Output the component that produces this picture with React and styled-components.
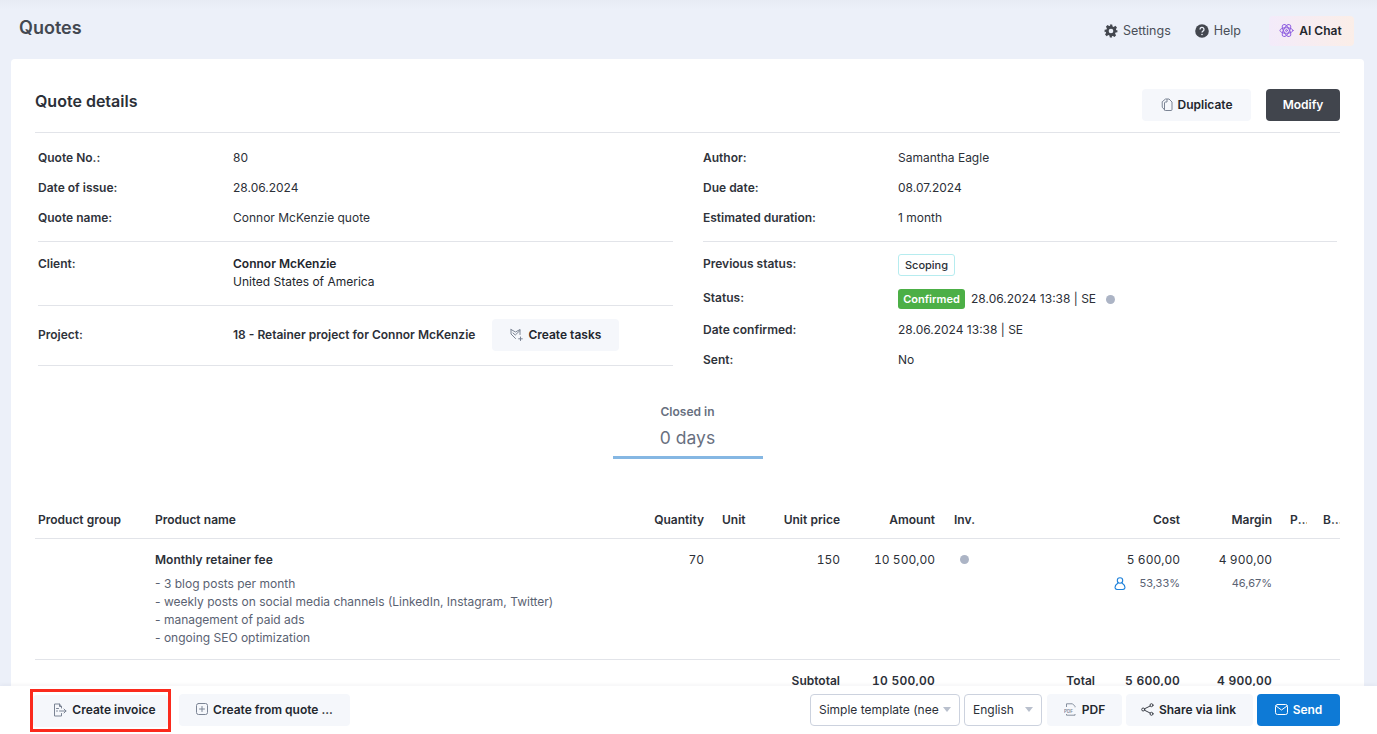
import React from "react";
import styled, { createGlobalStyle } from "styled-components";

const Global = createGlobalStyle`
  html, body { margin: 0; padding: 0; height: 100%; overflow: hidden; }
  body { font-family: Inter, "Liberation Sans", sans-serif; color: #23272e; font-size: 12px; -webkit-font-smoothing: antialiased; }
  #root { height: 100%; }
  * { box-sizing: border-box; }
`;

const Page = styled.div`
  height: 734px; display: flex; flex-direction: column; background: #ecf0f9; overflow: hidden;
`;
const Header = styled.header`
  height: 59px; flex: none; display: flex; align-items: flex-start; justify-content: space-between;
  padding: 0 23px 0 19px;
  background: linear-gradient(#e7ebf4 0, #ecf0f9 10px);
`;
const Title = styled.h1`
  margin: 18px 0 0; font-size: 18px; line-height: 20px; font-weight: 600; color: #434851;
`;
const HeaderTools = styled.div`
  display: flex; align-items: center; margin-top: 16px; height: 30px;
`;
const ToolLink = styled.span`
  display: flex; align-items: center; gap: 5px; font-size: 12.5px; color: #4a4f58; margin-right: ${p => p.$mr}px;
  line-height: 14px; padding-bottom: ${p => p.$pb || 0}px;
`;
const AiButton = styled.span`
  display: flex; align-items: center; justify-content: center; gap: 5px; width: 85px; height: 30px;
  border-radius: 4px; font-weight: 600; font-size: 12px; color: #23272e; padding: 0 2px 1px 0;
  background: linear-gradient(90deg, #f3ebfa, #fbeee8);
`;
const Main = styled.main`
  flex: 1; min-height: 0; padding: 0 13px 0 11px; overflow: hidden;
`;
const Card = styled.section`
  background: #fff; border-radius: 4px 4px 0 0; padding: 30px 24px 0; height: 100%; overflow: hidden;
`;
const CardHead = styled.div`
  display: flex; justify-content: space-between; align-items: center; height: 32px; margin-bottom: 11px;
`;
const CardTitle = styled.h2`
  margin: 0 0 8px; font-size: 16px; line-height: 24px; font-weight: 600; color: #2c3038;
`;
const Actions = styled.div`display: flex; gap: 15px;`;
const Btn = styled.button`
  display: flex; align-items: center; justify-content: center; gap: 5px; height: 32px; width: ${p => p.$w}px;
  padding: 0 ${p => p.$pr || 0}px 2px ${p => p.$pl || 0}px; border: 0; border-radius: 4px; font: 600 12px Inter, sans-serif; color: #23272e; background: #f5f7fb;
  flex: none;
`;
const DarkBtn = styled(Btn)`background: #41454d; color: #fff;`;
const SendBtn = styled(Btn)`background: #0e7ad6; color: #fff;`;
const PdfBtn = styled(Btn)`margin-left: 1px;`;
const Details = styled.div`
  border-top: 1px solid #e2e4e9; display: grid; grid-template-columns: 635px 634px; column-gap: 30px; padding: 10px 3px 0;
`;
const Col = styled.div`display: flex; flex-direction: column;`;
const Group = styled.div`
  padding: 0 0 ${p => p.$pb ?? 8}px; border-bottom: ${p => p.$plain ? 0 : "1px solid #e2e4e9"};
`;
const Row = styled.div`
  display: grid; grid-template-columns: 195px 1fr; align-items: center; min-height: ${p => p.$h || 30}px;
  line-height: 16px;
`;
const ClientRow = styled(Row)`
  align-items: start; padding-top: 13px; line-height: 18px;
`;
const Label = styled.span`font-weight: 600; color: #2f333b; display: block;`;
const Value = styled.span`display: flex; align-items: center; color: #2c3038;`;
const Stack = styled.span`display: block;`;
const Strong = styled.strong`font-weight: 600; display: block;`;
const TaskBtn = styled(Btn)`margin-left: 17px; padding-bottom: 0;`;
const ProjectRow = styled(Row)`padding-bottom: 2px;`;
const Scoping = styled.span`
  display: inline-flex; align-items: center; height: 22px; padding: 0 5px; border: 1px solid #b6ecef; border-radius: 3px;
  font-size: 11px; font-weight: 500; margin-top: 2px; width: 57px; justify-content: center;
`;
const Confirmed = styled.span`
  display: inline-flex; align-items: center; justify-content: center; height: 20px; width: 67px; background: #4caf46; color: #fff; border-radius: 3px;
  font-size: 11px; font-weight: 600; margin-right: 6px;
`;
const StatusValue = styled(Value)`margin-top: 2px;`;
const Dot = styled.span`
  display: inline-block; width: 9px; height: 9px; border-radius: 50%; background: #acb4c5; margin-left: ${p => p.$ml || 0}px;
`;
const Closed = styled.div`
  width: 150px; margin: 35px auto 0; text-align: center; border-bottom: 3px solid #85b7e3; height: 54px;
`;
const ClosedLabel = styled.div`font-size: 12px; font-weight: 600; color: #68707f; line-height: 14px;`;
const ClosedValue = styled.div`font-size: 17.5px; color: #68707f; line-height: 24px; margin-top: 7px;`;
const Table = styled.div`margin-top: 42px; font-variant-numeric: tabular-nums;`;
const TRow = styled.div`
  display: grid; grid-template-columns: 117px 478px 77px 53px 83px 95px 62px 183px 92px 32px 33px;
  border-bottom: ${p => p.$line ? "1px solid #e2e4e9" : 0};
  min-height: ${p => p.$h}px; align-items: ${p => p.$start ? "start" : "center"};
  padding-top: ${p => p.$pt || 0}px;
`;
const Cell = styled.div`
  padding: 0 3px 0 ${p => p.$pl ?? 3}px; text-align: ${p => p.$right ? "right" : "left"};
  font-weight: ${p => p.$bold ? 600 : 400}; white-space: nowrap; overflow: hidden; line-height: 18px;
  ${p => p.$clip && "text-overflow: ellipsis;"}
  color: #2c3038;
`;
const Desc = styled.div`color: #5a6272; line-height: 18px; margin-top: 6px; font-variant-numeric: normal;`;
const Sub = styled.div`
  color: #5a6272; font-size: 11px; line-height: 18px; margin-top: 5px; display: flex; justify-content: flex-end; align-items: center; gap: 14px;
  font-variant-numeric: normal;
`;
const TotalPair = styled.div`display: flex; justify-content: flex-end; gap: 30px;`;
const Money = styled.span`letter-spacing: .25px;`;
const Footer = styled.footer`
  flex: none; height: 48px; background: #fff; display: flex; align-items: center; justify-content: space-between; padding: 0 37px 0 30px;
  box-shadow: 0 -1px 4px rgba(30, 40, 70, .06); position: relative; z-index: 1;
`;
const FooterGroup = styled.div`display: flex; align-items: center; gap: ${p => p.$gap}px;`;
const Highlight = styled.div`
  border: 3px solid #fb2a1d; width: 141px; height: 43px; display: flex; align-items: center; justify-content: center;
  margin-top: 1px;
`;
const Select = styled.div`
  width: ${p => p.$w}px; height: 32px; border: 1px solid #ccd2de; border-radius: 4px; padding: 0 8px 1px; display: flex; align-items: center; justify-content: space-between;
  color: #2c3038; font-size: 12px; white-space: nowrap; overflow: hidden;
`;
const Caret = styled.span`
  flex: none; width: 0; height: 0; border-left: 4px solid transparent; border-right: 4px solid transparent; border-top: 5px solid #b9c0cd; margin-left: 4px;
`;

const Ico = styled.svg`flex: none; fill: none; stroke: ${p => p.$c || "#7b8494"}; stroke-width: ${p => p.$sw || 1}; stroke-linecap: round; stroke-linejoin: round;`;

const Gear = () => (
  <svg width="14" height="14" viewBox="0 0 24 24" fill="#43474f"><path fillRule="evenodd" d="M10 1h4l.7 3.2 1.9.8 2.8-1.8 2.8 2.8-1.8 2.8.8 1.9L23 10.500v3.500l-3.200.7-.8 1.900 1.800 2.800-2.800 2.800-2.800-1.800-1.900.8L14 23h-4l-.7-3.200-1.900-.8-2.800 1.800-2.800-2.800 1.800-2.800-.8-1.900L1 14v-4l3.200-.7.8-1.900L3.200 4.600 6 1.800l2.800 1.800 1.900-.8zM12 8a4 4 0 100 8 4 4 0 000-8z"/></svg>
);
const HelpIco = () => (
  <svg width="14" height="14" viewBox="0 0 14 14"><circle cx="7" cy="7" r="6.800" fill="#43474f"/><path d="M5 5.400a2 2 0 113 1.700c-.7.4-1 .7-1 1.500" fill="none" stroke="#ecf0f9" strokeWidth="1.300"/><circle cx="7" cy="10.500" r=".8" fill="#ecf0f9"/></svg>
);
const Atom = () => (
  <Ico width="15" height="15" viewBox="0 0 24 24" $c="#8f5fe0" $sw={1.6}>
    <ellipse cx="12" cy="12" rx="10.500" ry="4.500"/><ellipse cx="12" cy="12" rx="10.500" ry="4.500" transform="rotate(60 12 12)"/><ellipse cx="12" cy="12" rx="10.500" ry="4.500" transform="rotate(120 12 12)"/><circle cx="12" cy="12" r="1.500"/>
  </Ico>
);
const CopyIco = () => (
  <Ico width="12" height="13" viewBox="0 0 12 13"><path d="M1.500 3.500 4.500 1H8l3 3v7.500a1 1 0 01-1 1H4.500a1 1 0 01-1-.7L1.500 9.500z"/><path d="M3.500 12V5a1 1 0 01.7-1H6V1.500"/></Ico>
);
const TaskIco = () => (
  <Ico width="13" height="13" viewBox="0 0 13 13"><path d="M1 1.500 5.500 4 10 1.500v5M1 1.500V6l4.500 4.500M3 5l2.300 2L10 2.500"/><path d="M10.500 9v3.500M8.700 10.800h3.600"/></Ico>
);
const InvoiceIco = () => (
  <Ico width="14" height="14" viewBox="0 0 14 14"><path d="M8.500 5V3.500L6.500 1H1.500v12h7v-2.500"/><path d="M6.500 1v2.500h2M3.500 5.500h2M3.500 8h1M6.500 8h6.500M11 6l2 2-2 2"/></Ico>
);
const PlusBoxIco = () => (
  <Ico width="12" height="12" viewBox="0 0 12 12"><rect x=".5" y=".5" width="11" height="11" rx="2"/><path d="M6 3.500v5M3.500 6h5"/></Ico>
);
const PdfIco = () => (
  <svg width="13" height="13" viewBox="0 0 13 13" fill="none" stroke="#7b8494" strokeWidth=".9"><path d="M2.500 4V.8h6l2.500 2.500v1M2.500 11v1.200h8.500V11"/><text x="0" y="9.700" fontSize="4.500" fill="#7b8494" stroke="none" fontFamily="Inter" fontWeight="600">PDF</text></svg>
);
const ShareIco = () => (
  <Ico width="13" height="13" viewBox="0 0 13 13" $c="#3c4048"><circle cx="2.200" cy="6.500" r="1.500"/><circle cx="10.500" cy="2.200" r="1.500"/><circle cx="10.500" cy="10.800" r="1.500"/><path d="M3.500 5.800 9.200 3M3.500 7.200l5.700 2.900"/></Ico>
);
const MailIco = () => (
  <Ico width="13" height="11" viewBox="0 0 13 11" $c="#fff"><rect x=".5" y=".5" width="12" height="10" rx="2"/><path d="m1 2 5.500 4L12 2"/></Ico>
);
const PersonIco = () => (
  <Ico width="12" height="13" viewBox="0 0 12 13" $c="#1f82db" $sw={1.1}><circle cx="6" cy="3.500" r="2.700"/><path d="M4 6C2.500 7 1 9 1 10.500 1 12 2 12.500 3.500 12.500h5c1.500 0 2.500-.5 2.500-2C11 9 9.500 7 8 6"/></Ico>
);

export default function App() {
  return (
    <Page>
      <Global />
      <Header>
        <Title>Quotes</Title>
        <HeaderTools>
          <ToolLink $mr={24}><Gear />Settings</ToolLink>
          <ToolLink $mr={28} $pb={1}><HelpIco />Help</ToolLink>
          <AiButton><Atom />AI Chat</AiButton>
        </HeaderTools>
      </Header>
      <Main>
        <Card>
          <CardHead>
            <CardTitle>Quote details</CardTitle>
            <Actions>
              <Btn $w={109}><CopyIco />Duplicate</Btn>
              <DarkBtn $w={74}>Modify</DarkBtn>
            </Actions>
          </CardHead>
          <Details>
            <Col>
              <Group>
                <Row><Label>Quote No.:</Label><Value>80</Value></Row>
                <Row><Label>Date of issue:</Label><Value>28.06.2024</Value></Row>
                <Row><Label>Quote name:</Label><Value>Connor McKenzie quote</Value></Row>
              </Group>
              <Group $pb={14}>
                <ClientRow $h={49}>
                  <Label>Client:</Label>
                  <Stack><Strong>Connor McKenzie</Strong>United States of America</Stack>
                </ClientRow>
              </Group>
              <Group $pb={0}>
                <ProjectRow $h={59}>
                  <Label>Project:</Label>
                  <Value><Strong>18 - Retainer project for Connor McKenzie</Strong><TaskBtn $w={127}><TaskIco />Create tasks</TaskBtn></Value>
                </ProjectRow>
              </Group>
            </Col>
            <Col>
              <Group>
                <Row><Label>Author:</Label><Value>Samantha Eagle</Value></Row>
                <Row><Label>Due date:</Label><Value>08.07.2024</Value></Row>
                <Row><Label>Estimated duration:</Label><Value>1 month</Value></Row>
              </Group>
              <Group $plain $pb={0}>
                <Row $h={44}><Label>Previous status:</Label><Value><Scoping>Scoping</Scoping></Value></Row>
                <Row $h={24}><Label>Status:</Label><StatusValue><Confirmed>Confirmed</Confirmed>28.06.2024 13:38 | SE<Dot $ml={10} /></StatusValue></Row>
                <Row $h={40}><Label>Date confirmed:</Label><Value>28.06.2024 13:38 | SE</Value></Row>
                <Row $h={20}><Label>Sent:</Label><Value>No</Value></Row>
              </Group>
            </Col>
          </Details>
          <Closed>
            <ClosedLabel>Closed in</ClosedLabel>
            <ClosedValue>0 days</ClosedValue>
          </Closed>
          <Table>
            <TRow $line $h={38}>
              <Cell $bold>Product group</Cell>
              <Cell $bold>Product name</Cell>
              <Cell $bold $right>Quantity</Cell>
              <Cell $bold $pl={15}>Unit</Cell>
              <Cell $bold $right>Unit price</Cell>
              <Cell $bold $right>Amount</Cell>
              <Cell $bold $pl={16}>Inv.</Cell>
              <Cell $bold $right>Cost</Cell>
              <Cell $bold $right>Margin</Cell>
              <Cell $bold $pl={15} $clip>Purchase</Cell>
              <Cell $bold $pl={16} $clip>Billable</Cell>
            </TRow>
            <TRow $line $h={121} $start $pt={12}>
              <Cell />
              <Cell>
                <Strong>Monthly retainer fee</Strong>
                <Desc>- 3 blog posts per month<br />- weekly posts on social media channels (LinkedIn, Instagram, Twitter)<br />- management of paid ads<br />- ongoing SEO optimization</Desc>
              </Cell>
              <Cell $right>70</Cell>
              <Cell />
              <Cell $right>150</Cell>
              <Cell $right>10 500,00</Cell>
              <Cell $pl={22}><Dot /></Cell>
              <Cell $right>5 600,00<Sub><PersonIco />53,33%</Sub></Cell>
              <Cell $right>4 900,00<Sub>46,67%</Sub></Cell>
              <Cell />
              <Cell />
            </TRow>
            <TRow $h={40} $start $pt={12}>
              <Cell />
              <Cell />
              <Cell />
              <Cell />
              <Cell $bold $right>Subtotal</Cell>
              <Cell $bold $right><Money>10 500,00</Money></Cell>
              <Cell />
              <Cell $bold $right>
                <TotalPair><span>Total</span><Money>5 600,00</Money></TotalPair>
              </Cell>
              <Cell $bold $right><Money>4 900,00</Money></Cell>
              <Cell />
              <Cell />
            </TRow>
          </Table>
        </Card>
      </Main>
      <Footer>
        <FooterGroup $gap={8}>
          <Highlight><Btn $w={135} $pl={8}><InvoiceIco />Create invoice</Btn></Highlight>
          <Btn $w={171}><PlusBoxIco />Create from quote ...</Btn>
        </FooterGroup>
        <FooterGroup $gap={4}>
          <Select $w={150}>Simple template (nee<Caret /></Select>
          <Select $w={78}>English<Caret /></Select>
          <PdfBtn $w={75}><PdfIco />PDF</PdfBtn>
          <Btn $w={127} $pr={2}><ShareIco />Share via link</Btn>
          <SendBtn $w={83}><MailIco />Send</SendBtn>
        </FooterGroup>
      </Footer>
    </Page>
  );
}
